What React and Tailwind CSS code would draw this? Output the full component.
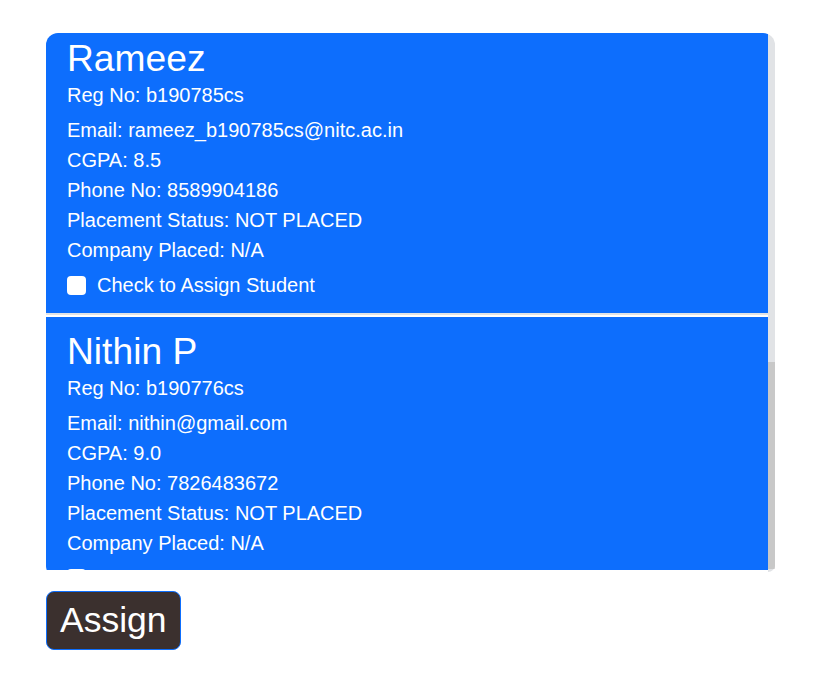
import { useEffect, useRef, useState } from "react";

const STUDENTS = [
  {
    name: "Arjun K",
    reg: "b190712cs",
    email: "arjun_b190712cs@nitc.ac.in",
    cgpa: "7.9",
    phone: "9447012345",
    status: "NOT PLACED",
    company: "N/A",
  },
  {
    name: "Fathima S",
    reg: "b190741cs",
    email: "fathima_b190741cs@nitc.ac.in",
    cgpa: "8.8",
    phone: "9061234587",
    status: "NOT PLACED",
    company: "N/A",
  },
  {
    name: "Gokul R",
    reg: "b190759cs",
    email: "gokul_b190759cs@nitc.ac.in",
    cgpa: "8.1",
    phone: "8086543210",
    status: "NOT PLACED",
    company: "N/A",
  },
  {
    name: "Rameez",
    reg: "b190785cs",
    email: "rameez_b190785cs@nitc.ac.in",
    cgpa: "8.5",
    phone: "8589904186",
    status: "NOT PLACED",
    company: "N/A",
  },
  {
    name: "Nithin P",
    reg: "b190776cs",
    email: "nithin@gmail.com",
    cgpa: "9.0",
    phone: "7826483672",
    status: "NOT PLACED",
    company: "N/A",
  },
];

const StudentCard = ({ s }) => (
  <div className="pl-[21px] pr-5 pt-3 pb-[13px] text-white">
    <h1 className="text-[37.2px] leading-[44px]">{s.name}</h1>
    <p className="text-[20px] leading-[30px]">Reg No: {s.reg}</p>
    <div className="mt-[5px] text-[20px] leading-[30px]">
      <p>Email: {s.email}</p>
      <p>CGPA: {s.cgpa}</p>
      <p>Phone No: {s.phone}</p>
      <p>Placement Status: {s.status}</p>
      <p>Company Placed: {s.company}</p>
    </div>
    <label className="mt-[5px] flex h-[30px] items-center gap-[11px] text-[20px]">
      <input
        type="checkbox"
        className="h-[19px] w-[19px] appearance-none rounded-[4px] bg-white"
      />
      Check to Assign Student
    </label>
  </div>
);

export default function App() {
  const listRef = useRef(null);
  const [thumb, setThumb] = useState({ top: 0, height: 0 });

  const syncThumb = () => {
    const el = listRef.current;
    if (!el) return;
    const ratio = el.clientHeight / el.scrollHeight;
    setThumb({ top: el.scrollTop * ratio, height: el.clientHeight * ratio });
  };

  useEffect(() => {
    // the list is scrolled down to the last two students
    if (listRef.current) listRef.current.scrollTop = 888;
    syncThumb();
  }, []);

  return (
    <div className="min-h-screen bg-white pl-[46px] pt-[33px] font-['Liberation_Sans',Arial,sans-serif]">
      <div className="flex h-[545px] w-[729px] overflow-hidden rounded-xl">
        <div
          ref={listRef}
          onScroll={syncThumb}
          className="min-w-0 flex-1 overflow-y-auto bg-[#0d6efd] bg-clip-content pb-2 [scrollbar-width:none]"
        >
          {STUDENTS.map((s, i) => (
            <div key={s.reg}>
              {i > 0 && (
                <div className="h-1 border-t-2 border-[#e3e3e3] bg-white" />
              )}
              <StudentCard s={s} />
            </div>
          ))}
        </div>
        <div className="mb-[6px] w-[7px] shrink-0 rounded-br-xl bg-[#e1e3e6]">
          <div
            className="bg-[#c8c8c8]"
            style={{ marginTop: thumb.top, height: thumb.height + 4 }}
          />
        </div>
      </div>
      <button className="mt-[13px] flex h-[59px] items-center rounded-lg border border-[#0d6efd] bg-[#3b302e] px-[13px] text-[35.5px] leading-[1.2] text-white">
        Assign
      </button>
    </div>
  );
}
